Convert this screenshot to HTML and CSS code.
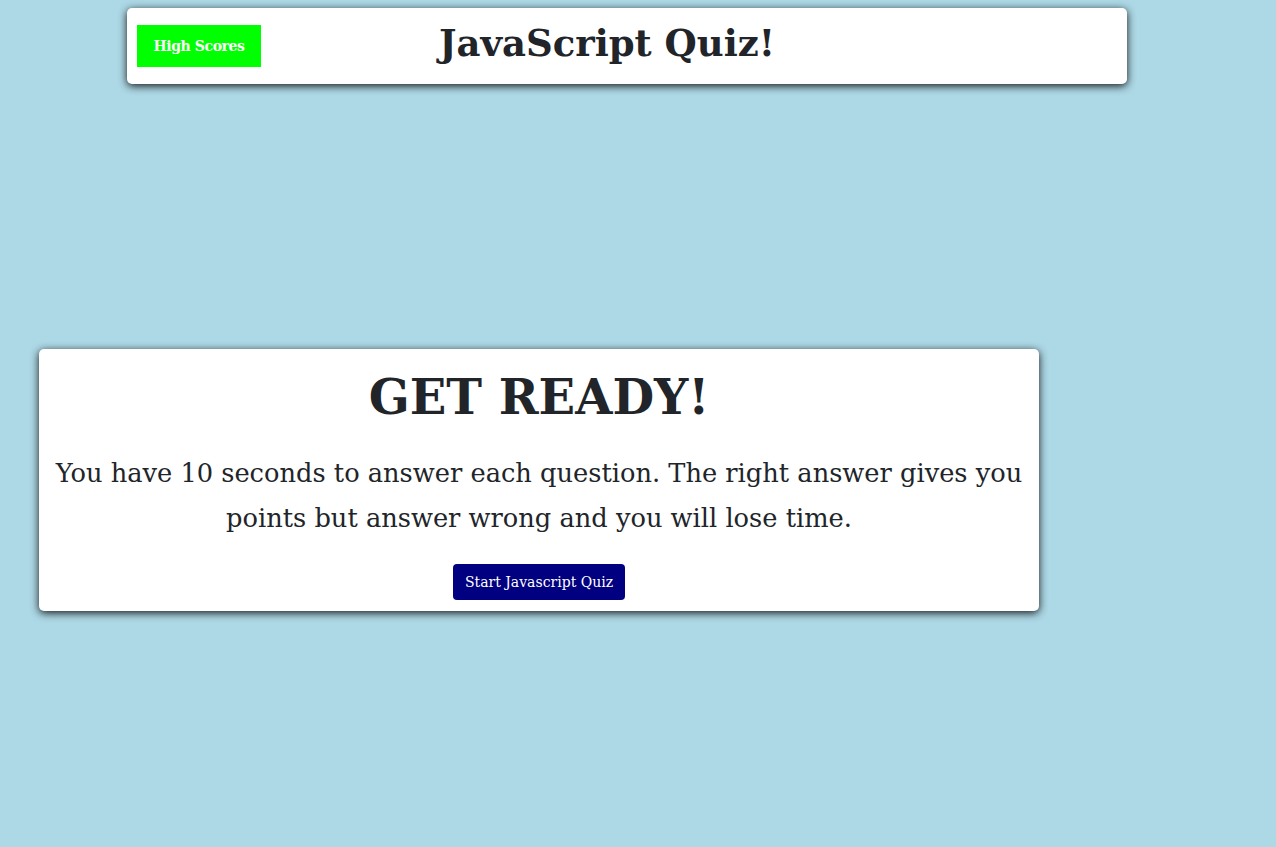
FILE: index.html
```html
<!DOCTYPE html>
<html lang="en">
<head>
<meta charset="utf-8">
<title>JavaScript Quiz</title>
<link rel="stylesheet" href="styles.css">
</head>
<body>
<header class="topbar">
  <button class="scores-btn">High Scores</button>
  <h1 class="title">JavaScript Quiz!</h1>
</header>
<main class="quiz-card">
  <h2 class="ready">GET READY!</h2>
  <p class="intro">You have 10 seconds to answer each question. The right answer gives you points but answer wrong and you will lose time.</p>
  <button class="start-btn">Start Javascript Quiz</button>
</main>
</body>
</html>
```
FILE: styles.css
```css
* { box-sizing: border-box; }
html, body { margin: 0; padding: 0; }
body {
  background: #add8e6;
  font-family: "DejaVu Serif", "Liberation Serif", serif;
  color: #212529;
  height: 847px;
  padding-top: 8px;
}
.topbar {
  width: 1000px;
  height: 76px;
  margin-left: 127px;
  background: #fff;
  border-radius: 5px;
  box-shadow: 0 2px 8px rgba(0,0,0,0.9);
  display: flex;
  align-items: flex-start;
  padding: 17px 10px 0 10px;
}
.scores-btn {
  width: 124px;
  height: 42px;
  background: #00ff00;
  color: #fff;
  border: none;
  font-family: "DejaVu Serif", serif;
  font-weight: bold;
  font-size: 14px;
  letter-spacing: -0.4px;
  padding: 0;
}
.title {
  margin: -4px 0 0 178px;
  font-size: 37px;
  font-weight: bold;
  line-height: 1.2;
}
.quiz-card {
  width: 1000px;
  margin: 265px 0 0 39px;
  background: #fff;
  border-radius: 5px;
  box-shadow: 0 2px 8px rgba(0,0,0,0.9);
  padding: 20px 10px 11px;
  text-align: center;
}
.ready {
  margin: 0;
  font-size: 48px;
  font-weight: bold;
  line-height: 1.2;
}
.intro {
  margin: 24px 0 23px;
  font-size: 25.7px;
  line-height: 45px;
}
.start-btn {
  height: 36px;
  padding: 0 12px;
  background: #000080;
  color: #fff;
  border: none;
  border-radius: 4px;
  font-family: "DejaVu Serif", serif;
  font-size: 14px;
}
```
